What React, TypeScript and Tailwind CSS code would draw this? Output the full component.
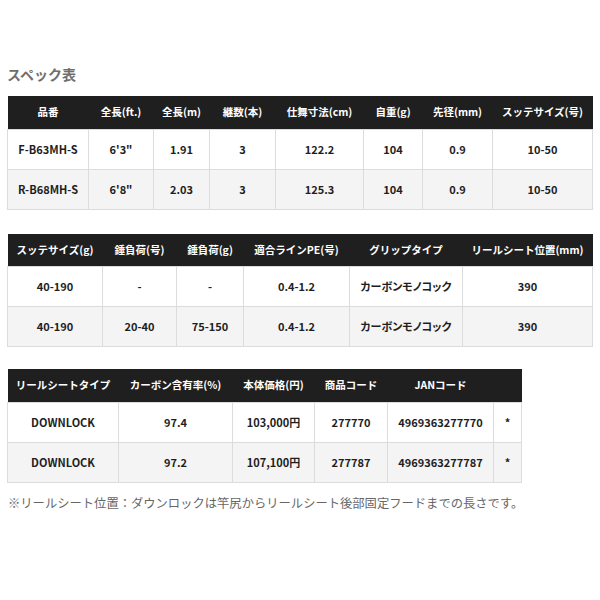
const font = { fontFamily: '"Noto Sans CJK JP", "Noto Sans", sans-serif' };

type Spec = {
  widths: string[];
  head: string[];
  rows: string[][];
  total: string;
};

const tables: Spec[] = [
  {
    total: "w-[585px]",
    widths: ["w-[81px]", "w-[65px]", "w-[56px]", "w-[66px]", "w-[88px]", "w-[59px]", "w-[70px]", "w-[100px]"],
    head: ["品番", "全長(ft.)", "全長(m)", "継数(本)", "仕舞寸法(cm)", "自重(g)", "先径(mm)", "スッテサイズ(号)"],
    rows: [
      ["F-B63MH-S", "6'3\"", "1.91", "3", "122.2", "104", "0.9", "10-50"],
      ["R-B68MH-S", "6'8\"", "2.03", "3", "125.3", "104", "0.9", "10-50"],
    ],
  },
  {
    total: "w-[585px]",
    widths: ["w-[95px]", "w-[74px]", "w-[67px]", "w-[106px]", "w-[113px]", "w-[130px]"],
    head: ["スッテサイズ(g)", "錘負荷(号)", "錘負荷(g)", "適合ラインPE(号)", "グリップタイプ", "リールシート位置(mm)"],
    rows: [
      ["40-190", "-", "-", "0.4-1.2", "カーボンモノコック", "390"],
      ["40-190", "20-40", "75-150", "0.4-1.2", "カーボンモノコック", "390"],
    ],
  },
  {
    total: "w-[514px]",
    widths: ["w-[111px]", "w-[114px]", "w-[82px]", "w-[73px]", "w-[106px]", "w-[28px]"],
    head: ["リールシートタイプ", "カーボン含有率(%)", "本体価格(円)", "商品コード", "JANコード", ""],
    rows: [
      ["DOWNLOCK", "97.4", "103,000円", "277770", "4969363277770", "*"],
      ["DOWNLOCK", "97.2", "107,100円", "277787", "4969363277787", "*"],
    ],
  },
];

function SpecTable({ spec }: { spec: Spec }) {
  return (
    <table className={`${spec.total} table-fixed border-collapse`}>
      <colgroup>
        {spec.widths.map((w, i) => (
          <col key={i} className={w} />
        ))}
      </colgroup>
      <thead>
        <tr className="h-[33px] bg-[#1f1f1f]">
          {spec.head.map((h, i) => (
            <th key={i} className="p-0 text-center text-[10.5px] font-bold text-white whitespace-nowrap">
              {h}
            </th>
          ))}
        </tr>
      </thead>
      <tbody>
        {spec.rows.map((row, r) => (
          <tr key={r} className={r % 2 === 1 ? "h-[40px] bg-[#f4f4f4]" : "h-[40px] bg-white"}>
            {row.map((c, i) => (
              <td
                key={i}
                className="border border-[#dcdcdc] p-0 text-center text-[11px] font-bold text-[#1e1e1e] whitespace-nowrap [font-feature-settings:'palt']"
              >
                {c}
              </td>
            ))}
          </tr>
        ))}
      </tbody>
    </table>
  );
}

export default function App() {
  return (
    <div className="w-[600px] h-[600px] bg-white px-[7px] pt-[64px]" style={font}>
      <h2 className="text-[14px] leading-[20px] font-bold text-[#6e6e6e] mb-[12px]">スペック表</h2>
      <SpecTable spec={tables[0]} />
      <div className="mt-[24px]">
        <SpecTable spec={tables[1]} />
      </div>
      <div className="mt-[22px]">
        <SpecTable spec={tables[2]} />
      </div>
      <p className="mt-[11px] pl-[1px] text-[12.3px] leading-[18px] text-[#666] whitespace-nowrap">
        ※リールシート位置：ダウンロックは竿尻からリールシート後部固定フードまでの長さです。
      </p>
    </div>
  );
}
